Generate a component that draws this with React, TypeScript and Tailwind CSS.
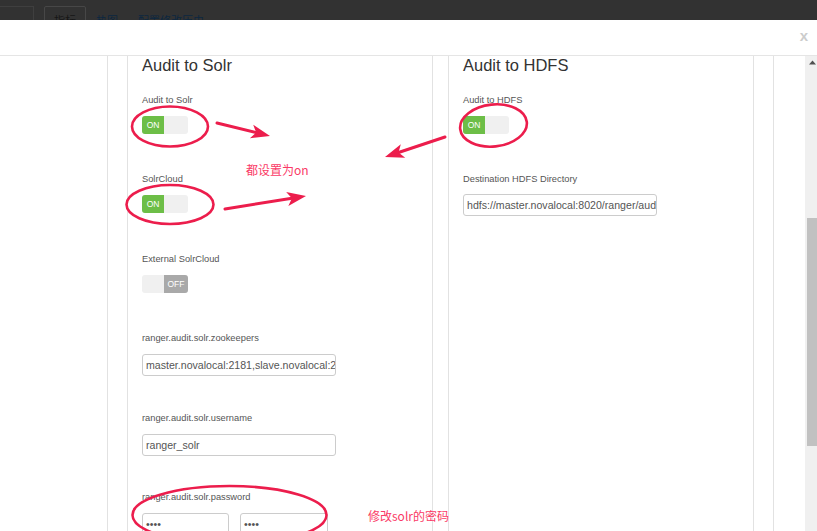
import React from "react";

const RED = "#ec1d4c";

const Toggle = ({ on }: { on: boolean }) =>
    on ? (
        <div className="flex w-[46px] h-[18px] rounded-[3px] overflow-hidden bg-[#f0f0f0]">
            <span className="w-[22px] h-full bg-[#6dbe47] text-white text-[8.5px] leading-[18px] text-center">ON</span>
        </div>
    ) : (
        <div className="flex w-[46px] h-[18px] rounded-[3px] overflow-hidden bg-[#f0f0f0]">
            <span className="w-[22px] h-full" />
            <span className="w-[24px] h-full bg-[#a9a9a9] text-white text-[8.5px] leading-[18px] text-center">OFF</span>
        </div>
    );

const Input = ({ value, w = "w-[194px]" }: { value: string; w?: string }) => (
    <div className={`${w} h-[22px] border border-[#cccccc] rounded-[3px] px-[3px] overflow-hidden whitespace-nowrap text-[10.6px] leading-[20px] text-[#555]`}>
        {value}
    </div>
);

const Field = ({ label, children }: { label: string; children: React.ReactNode }) => (
    <div className="h-[79.6px]">
        <div className="text-[9.3px] leading-[12px] text-[#555] mb-[10px]">{label}</div>
        {children}
    </div>
);

const Arrow = ({ x1, y1, x2, y2 }: { x1: number; y1: number; x2: number; y2: number }) => {
    const len = Math.hypot(x2 - x1, y2 - y1);
    const dx = (x2 - x1) / len;
    const dy = (y2 - y1) / len;
    const L = 19;
    const w = 7;
    const bx = x2 - dx * L;
    const by = y2 - dy * L;
    const nx = -dy;
    const ny = dx;
    const notchX = x2 - dx * L * 0.75;
    const notchY = y2 - dy * L * 0.75;
    const pts = `${x2},${y2} ${bx + nx * w},${by + ny * w} ${notchX},${notchY} ${bx - nx * w},${by - ny * w}`;
    return (
        <g>
            <line x1={x1} y1={y1} x2={notchX} y2={notchY} stroke={RED} strokeWidth={3} strokeLinecap="round" />
            <polygon points={pts} fill={RED} />
        </g>
    );
};

export default function App() {
    return (
        <div className="relative w-[817px] h-[531px] overflow-hidden bg-white font-['Liberation_Sans','Noto_Sans_CJK_SC',Arial,sans-serif]">
            {/* backdrop page tabs */}
            <div className="h-[20px] bg-[#323232] flex items-start overflow-hidden font-['Noto_Sans_CJK_SC',sans-serif]">
                <div className="mt-[6px] w-[34px] h-[20px] border border-l-0 border-[#3f3f3f]" />
                <div className="ml-[10px] mt-[6px] w-[42px] h-[20px] border border-[#474747] rounded-t-[2px] text-center pt-[8px] text-[11px] leading-[11px] text-[#161616]">指标</div>
                <span className="ml-[10px] mt-[15px] text-[11px] leading-[11px] text-[#0c2740]">热图</span>
                <span className="ml-[20px] mt-[15px] text-[11px] leading-[11px] text-[#0c2740]">配置修改历史</span>
            </div>

            {/* modal header */}
            <div className="h-[36px] border-b border-[#e5e5e5] flex justify-end pr-[9px] pt-[8px]">
                <span className="text-[15px] leading-[15px] font-bold text-[#cccccc]">x</span>
            </div>

            {/* modal body */}
            <div className="flex h-[475px]">
                <div className="flex-1 pl-[107px] overflow-hidden">
                    <div className="w-[667px] h-full border-x border-[#e2e2e2] px-[19px] flex gap-[15px]">
                        <div className="w-[306px] h-full border-x border-[#e2e2e2] px-[14px]">
                            <div className="h-[37.5px]">
                                <h3 className="text-[16.5px] leading-[19px] text-[#333]">Audit to Solr</h3>
                            </div>
                            <Field label="Audit to Solr">
                                <Toggle on />
                            </Field>
                            <Field label="SolrCloud">
                                <Toggle on />
                            </Field>
                            <Field label="External SolrCloud">
                                <Toggle on={false} />
                            </Field>
                            <Field label="ranger.audit.solr.zookeepers">
                                <Input value="master.novalocal:2181,slave.novalocal:2181" />
                            </Field>
                            <Field label="ranger.audit.solr.username">
                                <Input value="ranger_solr" />
                            </Field>
                            <Field label="ranger.audit.solr.password">
                                <div className="flex gap-[11px]">
                                    <Input value="••••" w="w-[87px]" />
                                    <Input value="••••" w="w-[88px]" />
                                </div>
                            </Field>
                        </div>
                        <div className="w-[306px] h-full border-x border-[#e2e2e2] px-[14px]">
                            <div className="h-[37.5px]">
                                <h3 className="text-[16.5px] leading-[19px] text-[#333]">Audit to HDFS</h3>
                            </div>
                            <Field label="Audit to HDFS">
                                <Toggle on />
                            </Field>
                            <Field label="Destination HDFS Directory">
                                <div className="-mt-[1px]">
                                    <Input value="hdfs://master.novalocal:8020/ranger/audit" />
                                </div>
                            </Field>
                        </div>
                    </div>
                </div>

                {/* scrollbar */}
                <div className="w-[12px] h-full bg-[#f0f0f0] flex flex-col">
                    <svg width="12" height="10" viewBox="0 0 12 10" className="mt-[4px]">
                        <polygon points="7.5,0.5 11,4.5 4,4.5" fill="#505050" />
                    </svg>
                    <div className="ml-[2px] mt-[148px] w-[10px] h-[228px] bg-[#c1c1c1]" />
                </div>
            </div>

            {/* annotations */}
            <svg className="absolute inset-0 pointer-events-none" width="817" height="531">
                <ellipse cx="170" cy="126.5" rx="38" ry="20" fill="none" stroke={RED} strokeWidth="2.6" />
                <ellipse cx="170" cy="204.5" rx="43.5" ry="19.5" fill="none" stroke={RED} strokeWidth="2.6" />
                <ellipse cx="493.5" cy="125.5" rx="33.5" ry="21" fill="none" stroke={RED} strokeWidth="2.6" transform="rotate(-6 493.5 125.5)" />
                <ellipse cx="229.5" cy="515" rx="97" ry="29" fill="none" stroke={RED} strokeWidth="2.6" />
                <Arrow x1={217} y1={123} x2={270} y2={136} />
                <Arrow x1={445} y1={137} x2={385} y2={157} />
                <Arrow x1={225} y1={209} x2={306} y2={196} />
            </svg>
            <span className="absolute left-[246px] top-[162px] text-[12px] leading-[16px] text-[#fa3a66] font-['Noto_Sans_CJK_SC',sans-serif]">都设置为on</span>
            <span className="absolute left-[368px] top-[508px] text-[12px] leading-[16px] text-[#fa3a66] font-['Noto_Sans_CJK_SC',sans-serif]">修改solr的密码</span>
        </div>
    );
}
